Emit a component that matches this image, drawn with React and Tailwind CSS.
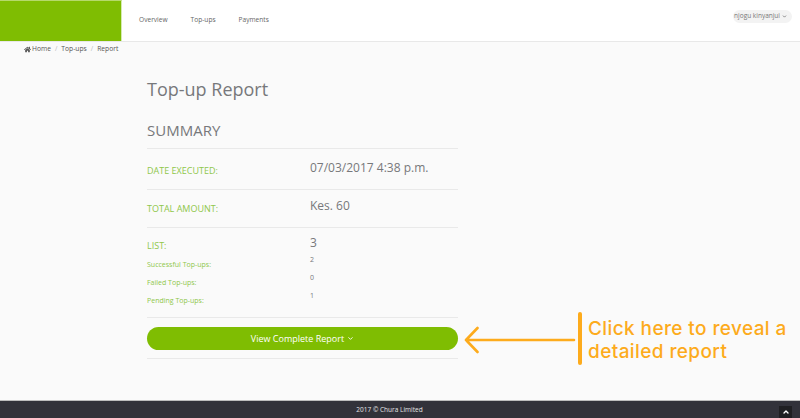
import { ChevronDown, ChevronUp } from 'lucide-react';
import { FaHome } from 'react-icons/fa';

const font = { fontFamily: '"Open Sans", sans-serif' };

const navItems = ['Overview', 'Top-ups', 'Payments'];

const subRows = [
  { label: 'Successful Top-ups:', value: '2' },
  { label: 'Failed Top-ups:', value: '0' },
  { label: 'Pending Top-ups:', value: '1' },
];

export default function App() {
  return (
    <div style={font} className="relative flex flex-col h-[418px] w-[800px] overflow-hidden bg-[#fafafa] text-[#77787b]">
      {/* Header */}
      <header className="flex h-[42px] shrink-0 items-stretch justify-between bg-white border-b border-[#e8e8e8]">
        <div className="flex items-stretch">
          <div className="w-[122px] bg-[#7fbd02] border-t border-r border-t-[#b5d96b] border-r-[#d5eab0]" />
          <nav className="flex items-center gap-[23px] pl-[17px] pb-[2px] text-[6.6px] text-[#666]">
            {navItems.map((item) => (
              <span key={item}>{item}</span>
            ))}
          </nav>
        </div>
        <div className="flex items-center pr-[8px] pb-[9px]">
          <div className="flex h-[13px] items-center gap-[2px] rounded-full bg-[#f3f3f3] pl-[1px] pr-[5px] text-[6.5px] text-[#777]">
            njogu kinyanjui
            <ChevronDown className="w-[5px] h-[5px]" strokeWidth={4} />
          </div>
        </div>
      </header>

      {/* Breadcrumb */}
      <div className="flex h-[14px] items-center pl-[24px] pt-[1px] text-[6.7px] text-[#555]">
        <FaHome className="w-[7px] h-[7px] mr-[1px]" />
        <span>Home</span>
        <span className="mx-[4px] text-[#bbb]">/</span>
        <span>Top-ups</span>
        <span className="mx-[4px] text-[#bbb]">/</span>
        <span>Report</span>
      </div>

      {/* Content */}
      <main className="flex-1 pl-[147px]">
        <div className="w-[311px]">
          <h1 className="h-[58px] pt-[19px] text-[18px] leading-[28px] text-[#77787b]">Top-up Report</h1>
          <h2 className="h-[35px] border-b border-[#e9e9e9] pt-[5px] text-[15px] leading-[22px] text-[#77787b]">SUMMARY</h2>

          <div className="grid h-[41px] grid-cols-[163px_1fr] border-b border-[#e9e9e9]">
            <span className="pt-[15px] text-[9px] leading-[14px] text-[#8fc74a]">DATE EXECUTED:</span>
            <span className="pt-[10px] text-[12px] leading-[18px]">07/03/2017 4:38 p.m.</span>
          </div>

          <div className="grid h-[38px] grid-cols-[163px_1fr] border-b border-[#e9e9e9]">
            <span className="pt-[12px] text-[9px] leading-[14px] text-[#8fc74a]">TOTAL AMOUNT:</span>
            <span className="pt-[7px] text-[12px] leading-[18px]">Kes. 60</span>
          </div>

          <div className="h-[90px] border-b border-[#e9e9e9]">
            <div className="grid h-[27px] grid-cols-[163px_1fr]">
              <span className="pt-[11px] text-[9px] leading-[14px] text-[#8fc74a]">LIST:</span>
              <span className="pt-[6px] text-[12px] leading-[18px]">3</span>
            </div>
            {subRows.map(({ label, value }) => (
              <div key={label} className="grid h-[18px] grid-cols-[163px_1fr]">
                <span className="pt-[4px] text-[7px] leading-[12px] text-[#8fc74a]">{label}</span>
                <span className="text-[7px] leading-[10px]">{value}</span>
              </div>
            ))}
          </div>

          <div className="h-[41px] border-b border-[#e9e9e9] pt-[9px]">
            <button className="flex h-[23px] w-full items-center justify-center gap-[3px] rounded-full bg-[#7fbd02] text-[9px] text-white">
              View Complete Report
              <ChevronDown className="w-[7px] h-[7px]" strokeWidth={3} />
            </button>
          </div>
        </div>
      </main>

      {/* Footer */}
      <footer className="flex h-[18px] shrink-0 items-center justify-center border-t border-[#bdbdbd] bg-[#32323a] pr-[21px] text-[6.5px] text-[#e4e4e4]">
        2017 © Chura Limited
      </footer>

      {/* Back to top */}
      <div className="absolute right-[8px] bottom-0 flex h-[12px] w-[13px] items-center justify-center bg-[#1f1f22] text-white">
        <ChevronUp className="w-[8px] h-[8px]" strokeWidth={4} />
      </div>

      {/* Annotation */}
      <svg className="absolute left-[464px] top-[326px]" width="118" height="40" viewBox="0 0 118 40" fill="none" stroke="#fdab1c" strokeLinecap="round" strokeLinejoin="round">
        <path d="M13.5 2 L2 14 L13.5 26 M2 14 H110" strokeWidth="2.6" />
      </svg>
      <div className="absolute left-[578px] top-[312px] h-[53px] w-[4px] rounded-full bg-[#fdab1c]" />
      <p style={{ fontFamily: 'Inter, sans-serif' }} className="absolute left-[588px] top-[317px] w-[212px] text-[19px] leading-[23px] font-medium tracking-[0.4px] text-[#fdab1c]">
        Click here to reveal a detailed report
      </p>
    </div>
  );
}
